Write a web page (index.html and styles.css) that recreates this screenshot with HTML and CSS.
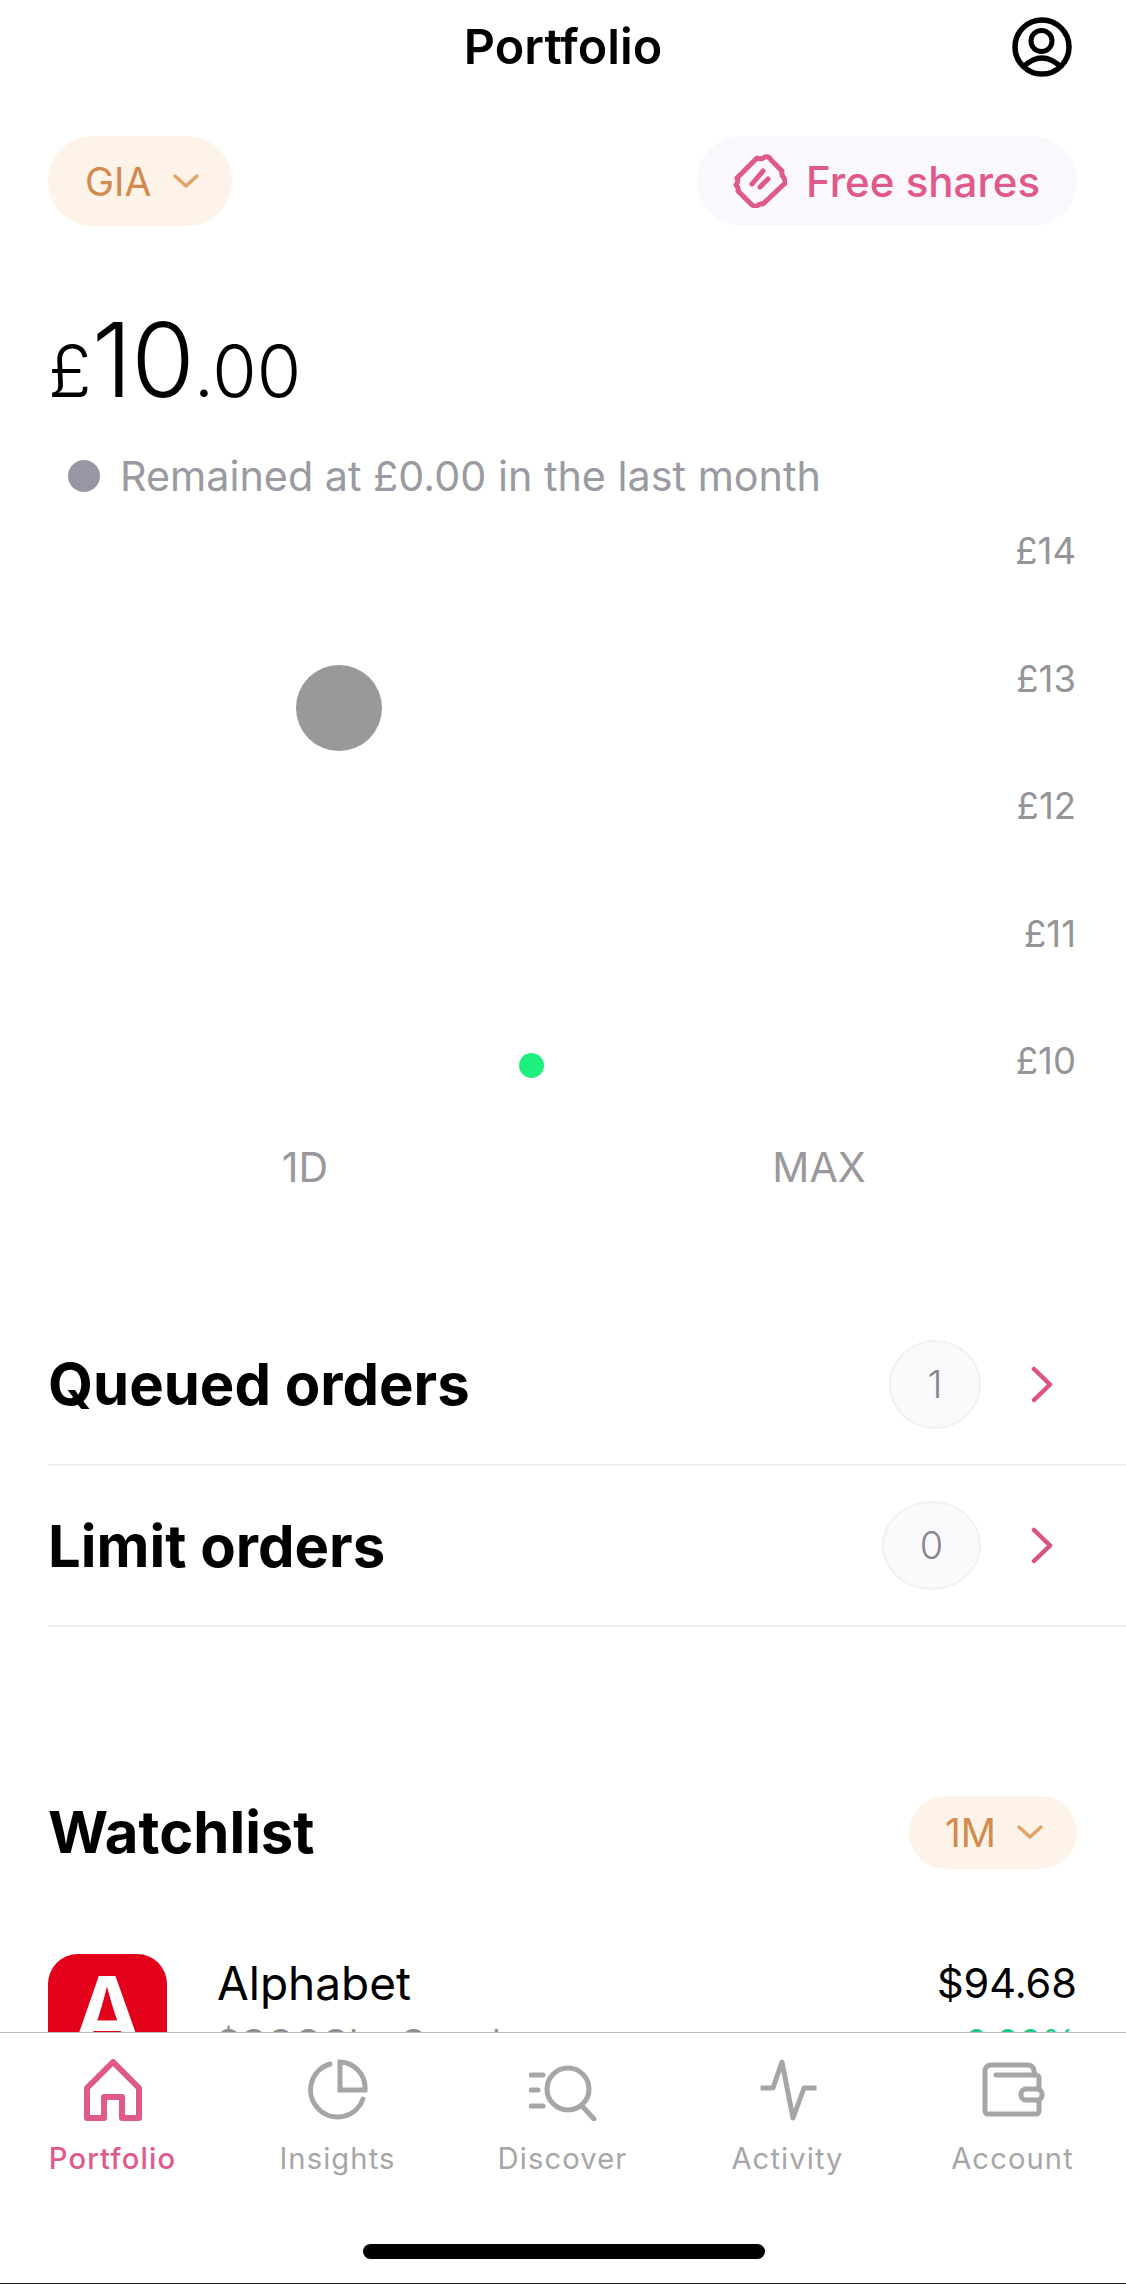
FILE: index.html
```html
<!DOCTYPE html>
<html lang="en-GB">
<head>
    <meta charset="UTF-8">
    <title>Portfolio</title>
    <link rel="stylesheet" href="styles.css">
</head>
<body>
<div class="screen">
    <!-- Header -->
    <header class="top-bar">
        <h1 class="page-title">Portfolio</h1>
        <svg class="profile-icon" viewBox="0 0 60 60" fill="none" stroke="#000">
            <circle cx="30" cy="30" r="27" stroke-width="5.5"/>
            <circle cx="29.5" cy="24" r="10.5" stroke-width="5"/>
            <path d="M11 50Q30 32 49 50" stroke-width="5"/>
        </svg>
    </header>

    <!-- Pills -->
    <div class="pill-row">
        <div class="pill pill-account">
            <span>GIA</span>
            <svg class="pill-chevron" viewBox="0 0 28 16" fill="none" stroke="#e2a468" stroke-width="3.5" stroke-linecap="round" stroke-linejoin="round"><path d="M3 3l11 10L25 3"/></svg>
        </div>
        <div class="pill pill-shares">
            <svg class="ticket-icon" viewBox="0 0 54 54" fill="none" stroke="#df5a8b" stroke-width="5" stroke-linecap="round" stroke-linejoin="round">
                <path d="M3 31Q6 27 4 24L24 4Q28 6 32 3Q36 2 38 6L49 17Q48 21 51 24L52 27Q53 29 50 31L30 50Q27 49 24 52Q21 53 18 50L5 37Q6 34 3 31Z"/>
                <path d="M19 30L30 17M27 33L35 25"/>
            </svg>
            <span>Free shares</span>
        </div>
    </div>

    <!-- Balance -->
    <div class="balance"><span class="balance-small">£</span>10<span class="balance-small">.00</span></div>
    <div class="status"><span class="status-dot"></span>Remained at £0.00 in the last month</div>

    <!-- Chart -->
    <div class="chart">
        <div class="chart-axis">
            <span>£14</span>
            <span>£13</span>
            <span>£12</span>
            <span>£11</span>
            <span>£10</span>
        </div>
        <span class="chart-touch"></span>
        <span class="chart-point"></span>
    </div>
    <div class="range-row">
        <span>1D</span>
        <span>MAX</span>
    </div>

    <!-- Orders -->
    <div class="orders">
        <div class="order-row">
            <span class="section-title">Queued orders</span>
            <span class="count count-one">1</span>
            <svg class="row-chevron" viewBox="0 0 22 37" fill="none" stroke="#dc5283" stroke-width="4.5" stroke-linecap="round" stroke-linejoin="round"><path d="M3 3l16 15.500L3 34"/></svg>
        </div>
        <div class="order-row">
            <span class="section-title">Limit orders</span>
            <span class="count">0</span>
            <svg class="row-chevron" viewBox="0 0 22 37" fill="none" stroke="#dc5283" stroke-width="4.5" stroke-linecap="round" stroke-linejoin="round"><path d="M3 3l16 15.500L3 34"/></svg>
        </div>
    </div>

    <!-- Watchlist -->
    <div class="watch-head">
        <span class="section-title">Watchlist</span>
        <div class="pill pill-period">
            <span>1M</span>
            <svg class="pill-chevron" viewBox="0 0 28 16" fill="none" stroke="#e2a468" stroke-width="3.5" stroke-linecap="round" stroke-linejoin="round"><path d="M3 3l11 10L25 3"/></svg>
        </div>
    </div>
    <div class="stock">
        <div class="stock-logo"><span>A</span></div>
        <div class="stock-name">
            <div>Alphabet</div>
            <div class="stock-sub">$GOOGL · Google</div>
        </div>
        <div class="stock-price">
            <div>$94.68</div>
            <div class="stock-change">0.00%</div>
        </div>
    </div>

    <!-- Tab bar -->
    <nav class="tab-bar">
        <div class="tab tab-active">
            <svg class="tab-icon" viewBox="0 0 60 62" fill="none" stroke="#df5a8b" stroke-width="6" stroke-linejoin="round"><path d="M30 3L56 29V59H39V38H21V59H4V29Z"/></svg>
            <span>Portfolio</span>
        </div>
        <div class="tab">
            <svg class="tab-icon" viewBox="1 0 60 62" fill="none" stroke="#a6a6a8" stroke-width="5" stroke-linecap="round"><path d="M23 5A27 27 0 1 0 56 40"/><path d="M33 3V31H58A26 26 0 0 0 33 3Z" stroke-linejoin="miter"/></svg>
            <span>Insights</span>
        </div>
        <div class="tab">
            <svg class="tab-icon" viewBox="0 0 68 62" fill="none" stroke="#a6a6a8" stroke-width="5" stroke-linecap="round"><path d="M2 16H14M2 31H9M2 47H14"/><circle cx="39" cy="30" r="21"/><path d="M53 47L65 60"/></svg>
            <span>Discover</span>
        </div>
        <div class="tab">
            <svg class="tab-icon" viewBox="0 0 60 62" fill="none" stroke="#a6a6a8" stroke-width="5" stroke-linejoin="round" stroke-linecap="square"><path d="M5 29H15L24 3L35 59L46 29H56"/></svg>
            <span>Activity</span>
        </div>
        <div class="tab">
            <svg class="tab-icon" viewBox="-1 0 64 62" fill="none" stroke="#a6a6a8" stroke-width="5" stroke-linecap="round"><path d="M52 16V12a6 6 0 0 0-6-6H9a6 6 0 0 0-6 6v40a3 3 0 0 0 3 3h48a3 3 0 0 0 3-3V42"/><path d="M57 30V19a3 3 0 0 0-3-3H14"/><rect x="39" y="30" width="21" height="11" rx="5"/></svg>
            <span>Account</span>
        </div>
        <div class="home-bar"></div>
    </nav>
</div>
</body>
</html>
```

FILE: styles.css
```css
* {
    box-sizing: border-box;
}
body {
    margin: 0;
    font-family: Inter, "Noto Sans", sans-serif;
    color: #000;
    background-color: #fff;
}
.screen {
    position: relative;
    width: 1126px;
    height: 2284px;
    overflow: hidden;
    padding-left: 48px;
    border-bottom: 1px solid #222;
}

/* header */
.top-bar {
    display: flex;
    justify-content: flex-end;
    align-items: center;
    height: 94px;
    padding-right: 54px;
}
.page-title {
    position: absolute;
    top: 18px;
    left: 0;
    width: 100%;
    margin: 0;
    font-size: 48.500px;
    line-height: 58px;
    font-weight: 600;
    text-align: center;
}
.profile-icon {
    width: 60px;
    height: 60px;
}

/* pills */
.pill-row {
    display: flex;
    justify-content: space-between;
    margin-top: 42px;
    padding-right: 49px;
}
.pill {
    display: flex;
    align-items: center;
    height: 90px;
    border-radius: 45px;
    font-size: 39px;
}
.pill-account {
    width: 184px;
    padding-left: 37px;
    gap: 21px;
    color: #d28a4e;
    background-color: #fef3e9;
}
.pill-chevron {
    width: 28px;
    height: 16px;
}
.pill-shares {
    width: 380px;
    padding-left: 36px;
    gap: 19px;
    color: #df5a8b;
    background-color: #faf8fc;
    font-weight: 500;
    font-size: 42px;
}
.ticket-icon {
    width: 54px;
    height: 54px;
}

/* balance */
.balance {
    margin-top: 73px;
    height: 134px;
    font-size: 103px;
    line-height: 121px;
    font-weight: 300;
    letter-spacing: -1px;
}
.balance-small {
    font-size: 72px;
    letter-spacing: 0;
}
.status {
    display: flex;
    align-items: center;
    gap: 20px;
    margin-top: 20px;
    padding-left: 20px;
    font-size: 41.300px;
    line-height: 46px;
    color: #9a9aa2;
}
.status-dot {
    width: 32px;
    height: 32px;
    border-radius: 50%;
    background-color: #9796a5;
}

/* chart */
.chart {
    position: relative;
    height: 645px;
    padding-right: 50px;
}
.chart-axis {
    display: flex;
    flex-direction: column;
    align-items: flex-end;
    gap: 89.500px;
    padding-top: 33px;
    font-size: 36.500px;
    line-height: 38px;
    color: #949499;
}
.chart-touch {
    position: absolute;
    left: 248px;
    top: 166px;
    width: 86px;
    height: 86px;
    border-radius: 50%;
    background-color: #999;
}
.chart-point {
    position: absolute;
    left: 471px;
    top: 554px;
    width: 25px;
    height: 25px;
    border-radius: 50%;
    background-color: #1ef07f;
}
.range-row {
    display: grid;
    grid-template-columns: 514px 514px;
    text-align: center;
    font-size: 41px;
    line-height: 46px;
    color: #98989d;
}

/* orders */
.orders {
    margin-top: 114px;
}
.order-row {
    display: flex;
    align-items: center;
    height: 162px;
    padding-right: 73px;
    border-bottom: 2px solid #eeeeee;
}
.order-row + .order-row {
    height: 161px;
}
.section-title {
    flex: 1;
    font-size: 58px;
    font-weight: 700;
}
.count {
    width: 99px;
    height: 89px;
    margin-right: 50px;
    border: 2px solid #f1f0f3;
    border-radius: 50%;
    background-color: #fafafc;
    font-size: 38px;
    font-weight: 300;
    line-height: 85px;
    text-align: center;
    color: #85858e;
}
.count-one {
    width: 92px;
}
.row-chevron {
    width: 22px;
    height: 37px;
}

/* watchlist */
.watch-head {
    display: flex;
    align-items: center;
    margin-top: 168.500px;
    padding-right: 49px;
}
.pill-period {
    width: 168px;
    height: 73px;
    padding-left: 36px;
    gap: 20px;
    border-radius: 37px;
    color: #d28a4e;
    background-color: #fef3e9;
}
.stock {
    display: flex;
    margin-top: 85px;
    padding-right: 49px;
}
.stock-logo {
    width: 119px;
    height: 119px;
    margin-right: 50px;
    border-radius: 30px;
    background-color: #e2001a;
    font-size: 100px;
    font-weight: 600;
    line-height: 119px;
    text-align: center;
    color: #fff;
}
.stock-logo span {
    position: relative;
    top: -1px;
}
.stock-name {
    flex: 1;
    padding-top: 2px;
    font-size: 46px;
    line-height: 54px;
}
.stock-sub {
    margin-top: 5px;
    font-size: 36px;
    color: #8e8e93;
}
.stock-price {
    padding-top: 2px;
    font-size: 41.500px;
    line-height: 54px;
    text-align: right;
}
.stock-change {
    margin-top: 5px;
    font-size: 36px;
    color: #1ec98a;
}

/* tab bar */
.tab-bar {
    position: absolute;
    left: 0;
    bottom: 0;
    width: 100%;
    height: 251px;
    display: grid;
    grid-template-columns: repeat(5, 225px);
    padding-top: 26px;
    border-top: 1px solid #bdbdbd;
    background-color: #fff;
}
.tab {
    display: flex;
    flex-direction: column;
    align-items: center;
    gap: 20px;
    font-size: 29.200px;
    line-height: 36px;
    letter-spacing: 1.100px;
    color: #a6a6a8;
}
.tab-icon {
    height: 62px;
}
.tab-active {
    color: #df5a8b;
    font-weight: 500;
}
.home-bar {
    position: absolute;
    left: 363px;
    bottom: 24px;
    width: 402px;
    height: 15px;
    border-radius: 8px;
    background-color: #000;
}
```
